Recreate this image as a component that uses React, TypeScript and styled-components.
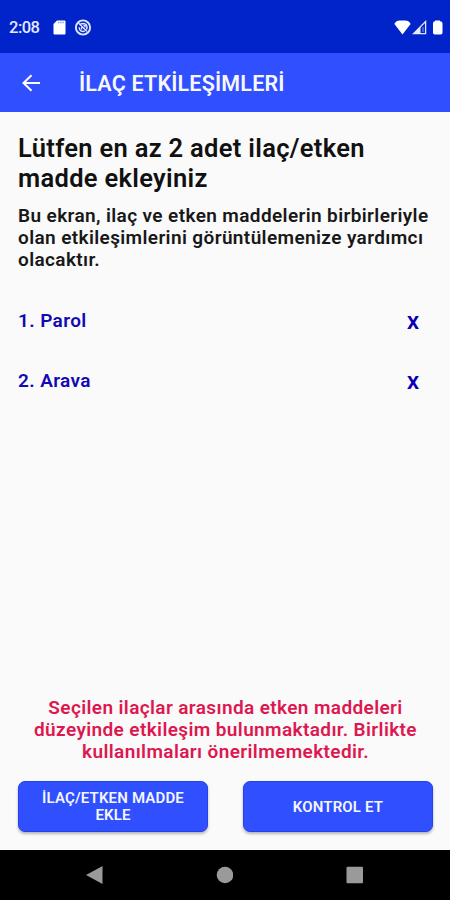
import React from "react";
import styled, { createGlobalStyle } from "styled-components";

const GlobalStyle = createGlobalStyle`
  * { box-sizing: border-box; }
  body { margin: 0; background: #fafafa; font-family: Roboto, "Liberation Sans", sans-serif; font-weight: 500; }
`;

const Screen = styled.div`
  display: flex;
  flex-direction: column;
  width: 450px;
  height: 900px;
  background: #fafafa;
`;

const StatusBar = styled.header`
  display: flex;
  align-items: center;
  height: 53px;
  padding: 1px 7px 0 9px;
  background: #0024ca;
  color: #e6e9ff;
`;

const Clock = styled.span`
  width: 44px;
  font-size: 16.5px;
  letter-spacing: -0.5px;
`;

const StatusIcons = styled.div<{ $gap: number; $end?: boolean }>`
  display: flex;
  align-items: center;
  gap: ${(p) => p.$gap}px;
  margin-left: ${(p) => (p.$end ? "auto" : "0")};
  svg { display: block; }
`;

const AppBar = styled.nav`
  display: flex;
  align-items: center;
  height: 59px;
  padding-left: 21px;
  background: #304ffe;
  color: #f6f7ff;
  svg { display: block; }
`;

const AppTitle = styled.h1`
  margin: 2px 0 0 38px;
  font-size: 21.5px;
  font-weight: 600;
  letter-spacing: 0.18px;
  white-space: nowrap;
`;

const Content = styled.main`
  display: flex;
  flex-direction: column;
  flex: 1;
  padding: 21px 17px 18px 18px;
`;

const Heading = styled.h2`
  margin: 0;
  font-size: 25.5px;
  line-height: 30px;
  font-weight: 600;
  letter-spacing: 0.31px;
  color: #111;
  white-space: nowrap;
`;

const Description = styled.p`
  margin: 12px 0 0;
  font-size: 19px;
  line-height: 22px;
  font-weight: 600;
  letter-spacing: 0.38px;
  color: #181818;
  white-space: nowrap;
`;

const DrugList = styled.ul`
  margin: 19px 0 0;
  padding: 0;
  list-style: none;
`;

const DrugRow = styled.li`
  display: flex;
  align-items: center;
  justify-content: space-between;
  height: 60px;
  padding-right: 14px;
  font-size: 19px;
  font-weight: 600;
  letter-spacing: 0.38px;
  color: #1208b4;
`;

const RemoveButton = styled.button`
  margin: 4px 0 0;
  padding: 0;
  border: 0;
  background: none;
  color: #0a00b6;
  font: 700 19px Roboto, sans-serif;
`;

const Warning = styled.p`
  margin: auto 0 18px;
  font-size: 19px;
  line-height: 22px;
  font-weight: 600;
  letter-spacing: 0.38px;
  text-align: center;
  color: #dd1850;
  white-space: nowrap;
`;

const Actions = styled.div`
  display: grid;
  grid-template-columns: 1fr 1fr;
  gap: 35px;
`;

const ActionButton = styled.button`
  height: 51px;
  padding: 1px 0 0;
  border: 1px solid #2242ef;
  border-radius: 7px;
  background: #304ffe;
  box-shadow: 0 2px 3px rgba(0, 0, 0, 0.28);
  color: #f4f6ff;
  font: 600 15px/17px Roboto, sans-serif;
  letter-spacing: 0.16px;
`;

const SystemNav = styled.footer`
  display: flex;
  align-items: center;
  gap: 112px;
  height: 50px;
  padding-left: 85px;
  background: #000;
  svg { display: block; }
`;

const drugs = ["Parol", "Arava"];

export default function App() {
  return (
    <>
      <GlobalStyle />
      <Screen>
        <StatusBar>
          <Clock>2:08</Clock>
          <StatusIcons $gap={9}>
            <svg width="13" height="15" viewBox="0 0 13 15">
              <path d="M4 0.5H11.5Q12.5 .5 12.5 1.5V13.5Q12.5 14.5 11.5 14.5H1.5Q.5 14.5 .5 13.5V4Z" fill="#fff" />
              <path d="M5 2.5H11" stroke="#8d9be8" strokeWidth="1.4" strokeDasharray="1.4 .8" />
            </svg>
            <svg width="17" height="17" viewBox="0 0 17 17" fill="none" stroke="#dfe4ff">
              <circle cx="8" cy="8.5" r="7.1" strokeWidth="1.9" />
              <path d="M4.6 6.2Q5.6 4.6 8 4.6Q12 4.8 12 8.6L11.4 10.6M4.2 8.2Q4.4 12.4 8 12.4L9.8 12" strokeWidth="1.5" />
              <path d="M3.5 4L12 12.5M6.6 10.5V8M8.4 6.6H10V8.4" strokeWidth="1.3" />
            </svg>
          </StatusIcons>
          <StatusIcons $gap={1} $end>
            <svg width="17" height="15" viewBox="0 0 17 15">
              <path d="M.4 4C1.6.8 4 .4 8.5.4S15.4.8 16.6 4L8.5 14.4Z" fill="#fff" />
            </svg>
            <svg width="15" height="15" viewBox="0 0 15 15">
              <path d="M1.5 13.7L13.6 1.5V13.7Z" fill="none" stroke="#dfe4ff" strokeWidth="1.3" />
              <path d="M1 14L8.5 6.5V14Z" fill="#e8ebff" />
              <path d="M11 7V12" stroke="#8d9be8" strokeWidth="1" />
            </svg>
            <svg width="15" height="15" viewBox="0 0 15 15">
              <path d="M7 1.2V.5H12V1.2Q14.5 1.2 14.5 3.5V12.8Q14.5 14.5 12.8 14.5H6.8Q5 14.5 5 12.8V3.5Q5 1.2 7 1.2Z" fill="#fff" />
            </svg>
          </StatusIcons>
        </StatusBar>
        <AppBar>
          <svg width="20" height="18" viewBox="0 0 20 18" fill="none" stroke="#fff" strokeWidth="2">
            <path d="M19 9H3M10.5 1.2L2.5 9L10.5 16.8" />
          </svg>
          <AppTitle>İLAÇ ETKİLEŞİMLERİ</AppTitle>
        </AppBar>
        <Content>
          <Heading>
            Lütfen en az 2 adet ilaç/etken
            <br />
            madde ekleyiniz
          </Heading>
          <Description>
            Bu ekran, ilaç ve etken maddelerin birbirleriyle
            <br />
            olan etkileşimlerini görüntülemenize yardımcı
            <br />
            olacaktır.
          </Description>
          <DrugList>
            {drugs.map((name, i) => (
              <DrugRow key={name}>
                <span>{i + 1}. {name}</span>
                <RemoveButton>X</RemoveButton>
              </DrugRow>
            ))}
          </DrugList>
          <Warning>
            Seçilen ilaçlar arasında etken maddeleri
            <br />
            düzeyinde etkileşim bulunmaktadır. Birlikte
            <br />
            kullanılmaları önerilmemektedir.
          </Warning>
          <Actions>
            <ActionButton>
              İLAÇ/ETKEN MADDE
              <br />
              EKLE
            </ActionButton>
            <ActionButton>KONTROL ET</ActionButton>
          </Actions>
        </Content>
        <SystemNav>
          <svg width="18" height="18" viewBox="0 0 18 18">
            <path d="M17.5 0V18L1 9Z" fill="#9a9a9a" />
          </svg>
          <svg width="18" height="18" viewBox="0 0 18 18">
            <circle cx="10" cy="9" r="8.3" fill="#9a9a9a" />
          </svg>
          <svg width="18" height="18" viewBox="0 0 18 18">
            <rect x="1.5" y=".7" width="16.5" height="16.6" rx="1" fill="#9a9a9a" />
          </svg>
        </SystemNav>
      </Screen>
    </>
  );
}
